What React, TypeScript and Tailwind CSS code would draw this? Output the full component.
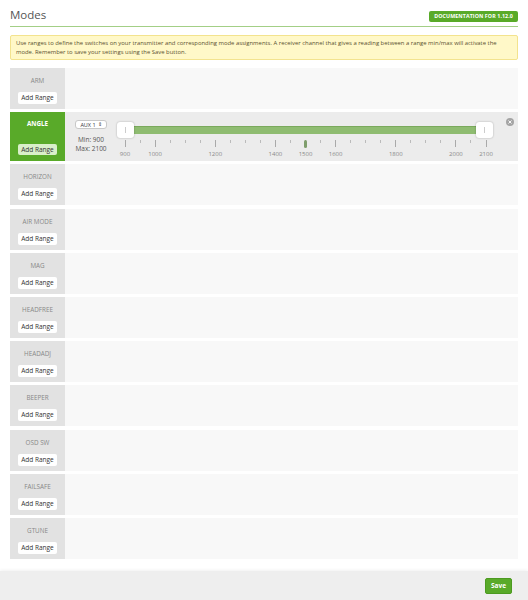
import React from "react";

const modes = [
  "ARM",
  "ANGLE",
  "HORIZON",
  "AIR MODE",
  "MAG",
  "HEADFREE",
  "HEADADJ",
  "BEEPER",
  "OSD SW",
  "FAILSAFE",
  "GTUNE",
];

const labels = [900, 1000, 1200, 1400, 1500, 1600, 1800, 2000, 2100];
const ticks: number[] = [];
for (let v = 900; v <= 2100; v += 50) ticks.push(v);

// slider is 376px wide, 900 sits at 7.5px and 2100 at 368.5px
const pos = (v: number) => 7.5 + ((v - 900) * 361) / 1200;

function RangeSlider() {
  return (
    <div className="relative w-[376px] h-[38px] mt-[6px]">
      <div className="absolute left-[7px] right-[8px] top-[3px] h-[8px] bg-[#8fbc71] border-t border-[#7aa95c]" />
      <div className="absolute left-0 top-[-1px] w-[17px] h-[16px] rounded-[3px] bg-white shadow-[0_0_2px_rgba(0,0,0,0.3)] flex items-center justify-center">
        <div className="w-px h-[6px] bg-[#ccc]" />
      </div>
      <div className="absolute left-[359px] top-[-1px] w-[17px] h-[16px] rounded-[3px] bg-white shadow-[0_0_2px_rgba(0,0,0,0.3)] flex items-center justify-center">
        <div className="w-px h-[6px] bg-[#ccc]" />
      </div>
      {ticks.map((v) => {
        const big = labels.includes(v);
        return (
          <div
            key={v}
            className={big ? "absolute top-[17px] w-px h-[7px] bg-[#aaa]" : "absolute top-[17px] w-px h-[3px] bg-[#bbb]"}
            style={{ left: pos(v) }}
          />
        );
      })}
      <div className="absolute top-[17px] w-[3px] h-[8px] rounded-full bg-[#7f9e6c]" style={{ left: pos(1500) - 1 }} />
      {labels.map((v) => (
        <div
          key={v}
          className="absolute top-[27px] w-[30px] -ml-[15px] text-center text-[6px] leading-[8px] text-[#888]"
          style={{ left: pos(v) + 0.5 }}
        >
          {v}
        </div>
      ))}
    </div>
  );
}

function ModeRow({ name }: { name: string }) {
  const active = name === "ANGLE";
  return (
    <div className={active ? "flex h-[49px]" : "flex h-[41px]"}>
      <div
        className={
          active
            ? "w-[55px] bg-[#59aa29] flex flex-col items-center pt-[8px] pb-[6px]"
            : "w-[55px] bg-[#e2e2e2] flex flex-col items-center pt-[9px] pb-[5px]"
        }
      >
        <div className={active ? "text-[6.3px] leading-[7px] font-bold text-white" : "text-[6.3px] leading-[7px] text-[#888]"}>
          {name}
        </div>
        <button
          className={
            active
              ? "mt-auto h-[11px] px-[3px] rounded-[2px] bg-[#d9efc9] text-[6.5px] leading-[11px] text-[#333]"
              : "mt-auto h-[12px] px-[3px] rounded-[2px] bg-white text-[6.5px] leading-[12px] text-[#333]"
          }
        >
          Add Range
        </button>
      </div>
      <div className={active ? "flex-1 bg-[#ececec] relative flex pl-[9px] pt-[8px]" : "flex-1 bg-[#f8f8f8]"}>
        {active && (
          <>
            <div className="w-[34px] flex flex-col items-center">
              <div className="w-[32px] h-[9px] bg-white border border-[#c8c8c8] rounded-[3px] flex items-center justify-center gap-[2px] text-[5.5px] text-[#333]">
                <span>AUX 1</span>
                <span className="text-[5px]">⇕</span>
              </div>
              <div className="mt-[6px] text-[6.5px] leading-[9px] text-[#555] text-center">
                Min: 900
                <br />
                Max: 2100
              </div>
            </div>
            <div className="ml-[9px] -mt-[3px]">
              <RangeSlider />
            </div>
            <div className="absolute right-[4px] top-[6px] w-[8px] h-[8px] rounded-full bg-[#a5a5a5] flex items-center justify-center">
              <svg width="4" height="4" viewBox="0 0 4 4">
                <path d="M0.5 0.5 L3.5 3.5 M3.5 0.5 L0.5 3.5" stroke="white" strokeWidth="0.9" />
              </svg>
            </div>
          </>
        )}
      </div>
    </div>
  );
}

export default function App() {
  return (
    <div className="w-[528px] h-[600px] bg-white flex flex-col font-['Open_Sans',sans-serif]">
      <div className="flex-1 px-[10px] pt-[8px]">
        <div className="flex items-end justify-between border-b border-[#a3cf86] pb-[4px]">
          <h1 className="text-[11.5px] leading-[14px] text-[#555]">Modes</h1>
          <a className="h-[11px] px-[5px] rounded-[2px] bg-[#59aa29] text-white text-[5.3px] font-bold leading-[11px] tracking-[0.1px]">
            DOCUMENTATION FOR 1.12.0
          </a>
        </div>
        <div className="mt-[8px] bg-[#fff8c8] border border-[#f3e38e] rounded-[2px] px-[5px] py-[3px] text-[5.9px] leading-[8.5px] text-[#5a5030]">
          Use ranges to define the switches on your transmitter and corresponding mode assignments. A receiver channel
          that gives a reading between a range min/max will activate the mode. Remember to save your settings using the
          Save button.
        </div>
        <div className="mt-[8px] flex flex-col gap-[3.2px]">
          {modes.map((m) => (
            <ModeRow key={m} name={m} />
          ))}
        </div>
      </div>
      <div className="h-[29px] bg-[#eeeeee] shadow-[0_-1px_3px_rgba(0,0,0,0.06)] flex items-center justify-end pr-[16px]">
        <button className="h-[16px] px-[5px] rounded-[2px] bg-[#59aa29] border border-[#4c9a20] text-white text-[6.5px] font-bold">
          Save
        </button>
      </div>
    </div>
  );
}
